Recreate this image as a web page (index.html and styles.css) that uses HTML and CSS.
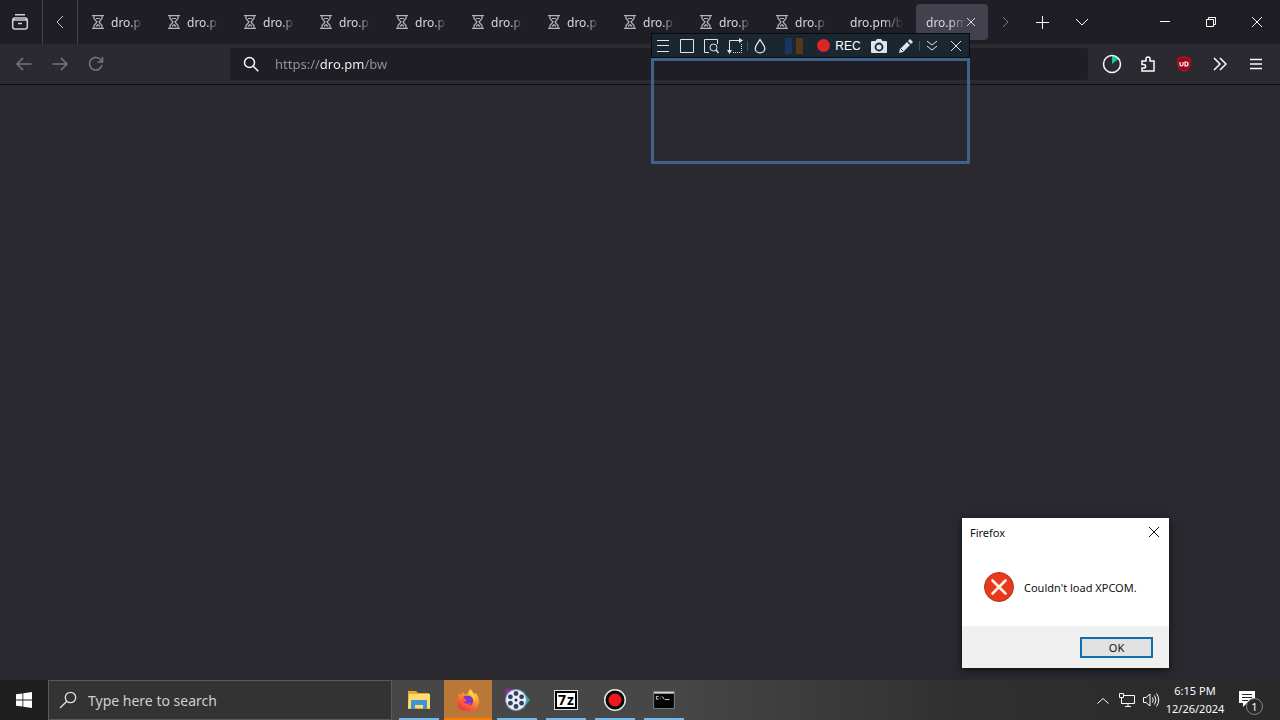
FILE: index.html
```html
<!DOCTYPE html>
<html lang="en">

<head>
    <meta charset="utf-8">
    <meta name="viewport" content="width=device-width, initial-scale=1">
    <title>dro.pm</title>
    <link rel="stylesheet" href="styles.css">
</head>

<body>

    <!-- one hourglass, used by every loading tab -->
    <svg class="defs" width="0" height="0">
        <symbol id="hourglass" viewBox="0 0 12 14">
            <path d="M0 .7h12M0 13.300h12M2 1v2.500L5 7l-3 3.500V13M10 1v2.500L7 7l3 3.500V13M4 3.500h4M4 11.500l2-2 2 2" fill="none" stroke="currentColor" stroke-width="1.200" />
        </symbol>
    </svg>

    <header class="tabbar">
        <button class="view" aria-label="Firefox View">
            <svg width="18" height="18" viewBox="0 0 18 18"><path d="M4 1.700h10M4 5h10q2.300 0 2.300 2.300v6.400q0 2.300-2.300 2.300H4q-2.300 0-2.300-2.300V7.300Q1.700 5 4 5zM2 7h14M7 10.500h4" /></svg>
        </button>
        <button class="scroll-left" aria-label="Scroll tabs left">
            <svg width="8" height="14" viewBox="0 0 8 14"><path d="M7 1 1 7l6 6" /></svg>
        </button>
        <nav class="tabs">
            <a class="tab" href="#"><svg><use href="#hourglass" /></svg><span>dro.p</span></a>
            <a class="tab" href="#"><svg><use href="#hourglass" /></svg><span>dro.p</span></a>
            <a class="tab" href="#"><svg><use href="#hourglass" /></svg><span>dro.p</span></a>
            <a class="tab" href="#"><svg><use href="#hourglass" /></svg><span>dro.p</span></a>
            <a class="tab" href="#"><svg><use href="#hourglass" /></svg><span>dro.p</span></a>
            <a class="tab" href="#"><svg><use href="#hourglass" /></svg><span>dro.p</span></a>
            <a class="tab" href="#"><svg><use href="#hourglass" /></svg><span>dro.p</span></a>
            <a class="tab" href="#"><svg><use href="#hourglass" /></svg><span>dro.p</span></a>
            <a class="tab" href="#"><svg><use href="#hourglass" /></svg><span>dro.p</span></a>
            <a class="tab" href="#"><svg><use href="#hourglass" /></svg><span>dro.p</span></a>
            <a class="tab plain" href="#"><span>dro.pm/b</span></a>
            <div class="tab plain active">
                <span>dro.pm</span>
                <button aria-label="Close tab"><svg width="8" height="8" viewBox="0 0 8 8"><path d="m0 0 8 8M8 0 0 8" /></svg></button>
            </div>
        </nav>
        <button class="tab-btn dim" aria-label="Scroll tabs right">
            <svg width="8" height="12" viewBox="0 0 8 12"><path d="m1 1 5 5-5 5" /></svg>
        </button>
        <button class="tab-btn" aria-label="New tab">
            <svg width="13" height="13" viewBox="0 0 13 13"><path d="M6.500 0v13M0 6.500h13" /></svg>
        </button>
        <button class="tab-btn" aria-label="List all tabs">
            <svg width="14" height="8" viewBox="0 0 14 8"><path d="m1 1 6 6 6-6" /></svg>
        </button>
        <div class="window-btns">
            <button aria-label="Minimize"><svg width="10" height="10" viewBox="0 0 10 10"><path d="M0 4.500h10" /></svg></button>
            <button aria-label="Restore"><svg width="10" height="10" viewBox="0 0 10 10"><path d="M.5 2.500h7v7h-7zM2.500 2.500v-2h7v7h-2" /></svg></button>
            <button aria-label="Close"><svg width="10" height="10" viewBox="0 0 10 10"><path d="m0 0 10 10M10 0 0 10" /></svg></button>
        </div>
    </header>

    <div class="toolbar">
        <button class="dim" aria-label="Back"><svg width="16" height="14" viewBox="0 0 16 14"><path d="M15.500 7H1M7 1 1 7l6 6" /></svg></button>
        <button class="dim" aria-label="Forward"><svg width="16" height="14" viewBox="0 0 16 14"><path d="M.5 7H15M9 1l6 6-6 6" /></svg></button>
        <button class="dim" aria-label="Reload"><svg width="16" height="16" viewBox="0 0 16 16"><path d="M14 9a6.300 6.300 0 1 1-2-6l2.500 2.500M14.500 1v5h-5" /></svg></button>
        <label class="urlbar">
            <svg width="16" height="16" viewBox="0 0 16 16"><circle cx="6.500" cy="6.500" r="5" /><path d="m10.300 10.300 5 5" /></svg>
            <input type="text" aria-label="Address" value="https://dro.pm/bw">
        </label>
        <button aria-label="Usage">
            <svg width="20" height="20" viewBox="0 0 20 20"><path d="M10 10V2a8 8 0 0 1 6.500 3z" class="teal" /><circle cx="10" cy="10" r="8.500" /></svg>
        </button>
        <button aria-label="Extensions">
            <svg width="16" height="16" viewBox="0 0 16 16"><path d="M2 5h4V3a2 2 0 0 1 4 0v2h4v10H2v-3h1.800a1.800 1.800 0 0 0 0-3.600H2z" /></svg>
        </button>
        <button aria-label="uBlock Origin">
            <svg class="ublock" width="16" height="16" viewBox="0 0 16 16"><path d="M8 .8q3 1.200 6.200 1.700v6Q14.200 13 8 15.300 1.800 13 1.800 8.500v-6Q5 2 8 .8z" fill="#9c0716" stroke="#c91529" /><path d="M4 6v2.500q0 1.500 1.500 1.500T7 8.500V6M9 6v4h1.200q1.800 0 1.800-2t-1.800-2z" stroke="#fff" stroke-width="1.200" /></svg>
        </button>
        <button aria-label="More tools"><svg width="14" height="14" viewBox="0 0 14 14"><path d="m1 1 6 6-6 6M7 1l6 6-6 6" /></svg></button>
        <button aria-label="Menu"><svg width="14" height="12" viewBox="0 0 14 12"><path d="M1 1.500h12M1 6h12M1 10.500h12" /></svg></button>
    </div>

    <main class="page"></main>

    <!-- screen recorder floating over the browser -->
    <section class="recorder">
        <div class="rec-bar">
            <button aria-label="Menu"><svg width="12" height="12" viewBox="0 0 12 12"><path d="M0 .5h12M0 5.500h12M0 11.500h12" /></svg></button>
            <button aria-label="Region"><svg width="14" height="14" viewBox="0 0 14 14"><path d="M.5.5h13v13H.5z" /></svg></button>
            <button aria-label="Find window"><svg width="16" height="16" viewBox="0 0 16 16"><path d="M6 14.500H1.500v-13h13V6" /><circle cx="10.500" cy="9.500" r="3.500" /><path d="m13 12 2.500 3" stroke-width="1.500" /></svg></button>
            <button aria-label="Move region"><svg width="16" height="16" viewBox="0 0 16 16"><path d="M2.500 13V2.500H13" /><path d="m12 0 4 2.500L12 5zM0 12h5l-2.500 4z" fill="#dfe5e8" stroke="none" /><path d="M14.500 6v8.500H6" stroke-dasharray="1 1" /></svg></button>
            <i class="sep"></i>
            <button aria-label="Opacity"><svg width="12" height="16" viewBox="0 0 12 16"><path d="M6 1.500C4 5 1.200 7.500 1.200 10.500a4.800 4.300 0 0 0 9.600 0C10.800 7.500 8 5 6 1.500z" stroke-width="1.300" /></svg></button>
            <span class="levels"><i></i><i></i></span>
            <button class="rec"><i></i>REC</button>
            <button class="wide" aria-label="Screenshot"><svg width="16" height="14" viewBox="0 0 16 14"><path d="M1 2h3.500L6 0h4l1.500 2H15q1 0 1 1v10q0 1-1 1H1q-1 0-1-1V3q0-1 1-1z" fill="#dfe5e8" stroke="none" /><circle cx="8" cy="8" r="3.500" stroke="#1b2730" stroke-width="1.800" /></svg></button>
            <button class="wide" aria-label="Draw"><svg width="14" height="14" viewBox="0 0 14 14"><path d="m0 14 1-4 7-7 3 3-7 7zM9 2l2-2 3 3-2 2z" fill="#dfe5e8" stroke="none" /><path d="m2 10 2 2" stroke="#1b2730" /></svg></button>
            <i class="sep"></i>
            <button aria-label="Collapse"><svg width="10" height="10" viewBox="0 0 10 10"><path d="m0 0 5 4 5-4M0 5l5 4 5-4" /></svg></button>
            <button aria-label="Close recorder"><svg width="10" height="10" viewBox="0 0 10 10"><path d="m0 0 10 10M10 0 0 10" /></svg></button>
        </div>
        <div class="rec-frame"></div>
    </section>

    <!-- error message -->
    <section class="dialog" role="alertdialog" aria-labelledby="dialog_title">
        <div class="dialog-title">
            <span id="dialog_title">Firefox</span>
            <button aria-label="Close"><svg width="10" height="10" viewBox="0 0 10 10"><path d="m0 0 10 10M10 0 0 10" /></svg></button>
        </div>
        <div class="dialog-body">
            <svg width="30" height="30" viewBox="0 0 30 30"><circle cx="15" cy="15" r="14.500" fill="#e8391f" stroke="#b8301c" /><path d="m8.500 8.500 13 13M21.500 8.500l-13 13" stroke="#fff4e8" stroke-width="2.600" stroke-linecap="round" /></svg>
            <p>Couldn't load XPCOM.</p>
        </div>
        <div class="dialog-foot"><button>OK</button></div>
    </section>

    <footer class="taskbar">
        <button class="start" aria-label="Start">
            <svg width="16" height="16" viewBox="0 0 16 16"><path d="M0 2.300 6.500 1.400v6.200H0zM7.300 1.300 16 0v7.600H7.300zM0 8.400h6.500v6.200L0 13.700zM7.300 8.400H16V16l-8.700-1.300z" fill="#fff" /></svg>
        </button>
        <label class="search">
            <svg width="18" height="18" viewBox="0 0 18 18"><circle cx="11.500" cy="6.500" r="5.200" /><path d="M7.800 10.200 1 17" /></svg>
            <input type="text" aria-label="Search" placeholder="Type here to search">
        </label>
        <div class="apps">
            <button aria-label="File Explorer">
                <svg width="24" height="24" viewBox="0 0 24 24"><path d="M1 3h8l2 2h11v16H1z" fill="#e9a82a" /><path d="M2 6h21v14H1z" fill="#ffdc6b" /><path d="M4 21v-8q0-1 1-1h14q1 0 1 1v8h-4v-4H8v4z" fill="#3e94d6" /><path d="M1 20h3v1H1zM20 20h3v1h-3z" fill="#f4bd45" /></svg>
            </button>
            <button class="current" aria-label="Firefox">
                <svg width="24" height="24" viewBox="0 0 24 24">
                    <defs>
                        <linearGradient id="flame" x1=".8" y1="0" x2=".2" y2="1"><stop offset="0" stop-color="#ffe13a" /><stop offset=".45" stop-color="#ff8a2a" /><stop offset="1" stop-color="#f0264f" /></linearGradient>
                    </defs>
                    <path d="M2 8 3 5l2 2 2-3 2 3q3-1 5-6 3 2 4 5l2-1q3 4 3 8 0 10-11 10T1 14q0-3 1-6z" fill="url(#flame)" />
                    <path d="M7 9q3-2 7-1 4 2 3 6t-5 4-6-4l4-1-2-3z" fill="#7a35d2" />
                    <path d="M5 11q3-1 6 1-1 2-4 2 3 3 8 1-2 4-6 3t-4-7z" fill="#ff5a3c" />
                    <path d="M14 2q6 5 5 12-2-6-6-8z" fill="#ffd43c" />
                </svg>
            </button>
            <button aria-label="Video Editor">
                <svg width="26" height="24" viewBox="0 0 26 24">
                    <path d="M1 1h9L2 9z" fill="#8c2da8" /><path d="m19 3 7 9-7 9z" fill="#2ba5b5" />
                    <circle cx="12" cy="12" r="10.500" fill="#e9edf5" stroke="#8390aa" />
                    <circle cx="12" cy="12" r="1.500" fill="#20293c" />
                    <g fill="#30405e"><circle cx="12" cy="5.500" r="2.400" /><circle cx="17.600" cy="8.800" r="2.400" /><circle cx="17.600" cy="15.200" r="2.400" /><circle cx="12" cy="18.500" r="2.400" /><circle cx="6.400" cy="15.200" r="2.400" /><circle cx="6.400" cy="8.800" r="2.400" /></g>
                </svg>
            </button>
            <button aria-label="7-Zip"><span class="sevenzip"><b>7</b><b>z</b></span></button>
            <button aria-label="Recorder">
                <svg width="24" height="24" viewBox="0 0 24 24"><circle cx="12" cy="12" r="10.300" fill="#0b0b0b" stroke="#e8e8e8" stroke-width="1.500" /><circle cx="12" cy="12" r="6.500" fill="#f0181e" /></svg>
            </button>
            <button aria-label="Command Prompt">
                <svg width="22" height="18" viewBox="0 0 24 20"><path d="M.5.5h23v19H.5z" fill="#050505" stroke="#8a8a8a" /><path d="M1 1h22v2H1z" fill="#d5d5d5" /><path d="M6 6H3.500v3H6M8 6.500v.5M8 8.500V9M10 6l2 3M13 9.500h5" fill="none" stroke="#e8e8e8" /></svg>
            </button>
        </div>
        <div class="tray">
            <button aria-label="Show hidden icons"><svg width="12" height="7" viewBox="0 0 12 7"><path d="m.5 6.500 5.500-5 5.500 5" /></svg></button>
            <button aria-label="Network"><svg width="18" height="16" viewBox="0 0 18 16"><path d="M6 3.500h10.500v8H3.500V7M10 11.500V14M7 14.500h6M1.500 1.500h4v4h-4zM3.500 5.500v6" /></svg></button>
            <button aria-label="Volume"><svg width="18" height="16" viewBox="0 0 18 16"><path d="M1.500 5.500H4L8 2v12l-4-3.500H1.500zM10.500 5.500q1.500 2.500 0 5M12.500 3.500q3 4.500 0 9M14.500 1.500q4.500 6.500 0 13" /></svg></button>
            <div class="clock"><time>6:15 PM</time><time>12/26/2024</time></div>
            <button class="notes" aria-label="Notifications">
                <svg width="16" height="16" viewBox="0 0 16 16"><path d="M0 0h16v12H8l-4 4v-4H0z" fill="#fff" stroke="none" /><path d="M3 3.500h10M3 6.500h10M3 9.500h6" stroke="#2d2d2d" /></svg>
                <span>1</span>
            </button>
        </div>
    </footer>

</body>

</html>
```
FILE: styles.css
```css
* {
    box-sizing: border-box;
}

body {
    margin: 0;
    min-height: 100vh;
    display: flex;
    flex-direction: column;
    font-family: "Noto Sans", sans-serif;
    font-size: 12px;
    color: #fbfbfe;
    background: #2a2930;
}

button {
    display: flex;
    align-items: center;
    justify-content: center;
    flex: none;
    padding: 0;
    border: 0;
    background: none;
    color: inherit;
    font: inherit;
}

input {
    padding: 0;
    border: 0;
    outline: 0;
    background: none;
    font: inherit;
}

svg {
    flex: none;
    fill: none;
    stroke: currentColor;
}

.defs {
    position: absolute;
}

.dim {
    color: #77767d;
}

/* tabs */

.tabbar {
    display: flex;
    height: 44px;
    background: #1f1e24;
}

.view {
    width: 43px;
    padding-right: 2px;
    border-right: 1px solid #45444b;
    color: #d0d0d6;
}

.view svg,
.toolbar svg {
    stroke-width: 1.5;
}

.scroll-left {
    width: 35px;
    border-right: 1px solid #45444b;
    color: #c4c4ca;
}

.tabs {
    display: flex;
    gap: 4px;
    padding: 4px 2px;
}

.tab {
    display: flex;
    align-items: center;
    width: 72px;
    padding-left: 12px;
    border-radius: 4px;
    color: #d8d8de;
    text-decoration: none;
}

.tab > svg {
    width: 12px;
    height: 14px;
    margin-right: 7px;
    color: #b5b4bb;
}

.tab span {
    width: 32px;
    white-space: nowrap;
    mask-image: linear-gradient(to right, #000 60%, transparent);
}

.plain {
    padding-left: 10px;
}

.tab.plain span {
    width: 54px;
}

.active {
    background: #42414d;
}

.tab.active span {
    width: 40px;
}

.active button {
    width: 10px;
}

.tab-btn {
    width: 40px;
}

.tab-btn.dim {
    width: 32px;
}

.window-btns {
    display: flex;
    margin-left: auto;
}

.window-btns button {
    width: 46px;
}

/* navigation */

.toolbar {
    display: flex;
    align-items: center;
    height: 41px;
    padding: 0 6px;
    background: #2b2a31;
    border-bottom: 1px solid #111015;
}

.toolbar button {
    width: 36px;
    height: 36px;
}

.urlbar {
    display: flex;
    flex: 1;
    align-items: center;
    height: 32px;
    margin: 0 6px 0 116px;
    padding-left: 13px;
    gap: 16px;
    border-radius: 2px;
    background: #1f1e24;
}

/* the host name is brighter than the rest of the address */
.urlbar input {
    flex: 1;
    font-size: 13px;
    color: transparent;
    caret-color: #fbfbfe;
    background: linear-gradient(to right, #96959b 45px, #fbfbfe 45px, #fbfbfe 90px, #96959b 90px);
    background-clip: text;
}

.teal {
    fill: #16c7a6;
    stroke: none;
}

.toolbar .ublock {
    stroke-width: 1;
}

.page {
    flex: 1;
}

/* recorder */

.recorder {
    position: absolute;
    top: 33px;
    left: 651px;
    width: 319px;
    color: #dfe5e8;
}

.rec-bar {
    display: flex;
    align-items: center;
    height: 25px;
    box-shadow: inset 0 0 0 1px #080a0c;
    background: #1b2730;
}

.rec-bar button {
    width: 24px;
    height: 22px;
}

.rec-bar .wide {
    width: 27px;
}

.sep {
    width: 1px;
    height: 10px;
    background: #465058;
}

.levels {
    display: flex;
    gap: 4px;
    margin: 0 10px 0 13px;
}

.levels i {
    width: 7px;
    height: 16px;
    background: #1c355e;
}

.levels i + i {
    background: #57371a;
}

.rec-bar .rec {
    width: 52px;
    gap: 5px;
    font-family: "Liberation Sans", sans-serif;
    font-size: 12px;
    color: #fff;
}

.rec i {
    width: 13px;
    height: 13px;
    border-radius: 50%;
    background: #dc2626;
}

.rec-frame {
    height: 106px;
    border: 3px solid #40618c;
}

/* message box */

.dialog {
    position: absolute;
    right: 111px;
    bottom: 52px;
    width: 207px;
    background: #fff;
    color: #111;
    font-size: 11px;
    box-shadow: 0 2px 8px #000a;
}

.dialog-title {
    display: flex;
    align-items: center;
    justify-content: space-between;
    height: 28px;
    padding-left: 8px;
}

.dialog-title button {
    width: 30px;
    height: 28px;
}

.dialog-body {
    display: flex;
    align-items: center;
    height: 80px;
    padding: 2px 0 0 22px;
    gap: 10px;
}

.dialog-body p {
    margin: 0;
    white-space: nowrap;
}

.dialog-foot {
    display: flex;
    justify-content: flex-end;
    padding: 11px 16px 10px;
    background: #f0f0f0;
}

.dialog-foot button {
    width: 73px;
    height: 21px;
    border: 2px solid #0f6fae;
    background: #e1e1e1;
}

/* taskbar */

.taskbar {
    display: flex;
    height: 40px;
    background: linear-gradient(to right, #1e1f1e 0, #474747 30%, #474747 52%, #303030 75%, #292929);
}

.start {
    width: 48px;
    background: #1e1f1e;
}

.search {
    display: flex;
    align-items: center;
    width: 344px;
    padding-left: 10px;
    gap: 11px;
    border: 1px solid #5a5a5a;
    background: #333;
    color: #e0e0e0;
}

.search input {
    flex: 1;
    font-size: 14px;
}

.search input::placeholder {
    color: #cfcfcf;
}

.search svg {
    stroke-width: 1.3;
}

.apps {
    display: flex;
    gap: 1px;
    padding-left: 3px;
}

.apps button {
    position: relative;
    width: 48px;
}

.apps svg {
    stroke: none;
}

.apps button::after {
    content: "";
    position: absolute;
    bottom: 0;
    left: 4px;
    right: 4px;
    height: 2px;
    background: #76b9ed;
}

.apps .current {
    background: #b97738;
}

.apps .current::after {
    left: 0;
    right: 0;
    background: #ff7a00;
}

.sevenzip {
    display: flex;
    align-items: center;
    justify-content: center;
    gap: 1px;
    width: 22px;
    height: 18px;
    border: 2px solid #000;
    outline: 1px solid #ddd;
    background: #fff;
    color: #000;
    font-size: 14px;
    line-height: 14px;
}

.tray {
    display: flex;
    align-items: center;
    margin-left: auto;
}

.tray button {
    width: 24px;
    height: 40px;
}

.clock {
    display: flex;
    flex-direction: column;
    align-items: center;
    width: 64px;
    font-size: 11px;
    line-height: 18px;
}

.tray .notes {
    position: relative;
    width: 48px;
    margin-right: 5px;
    padding: 0 8px 2px 0;
}

.notes span {
    position: absolute;
    top: 18px;
    right: 12px;
    width: 17px;
    height: 17px;
    border: 1px solid #888;
    border-radius: 50%;
    background: #292929;
    font-size: 11px;
    line-height: 15px;
    text-align: center;
}

.dialog-body svg,
.start svg {
    stroke: none;
}
```
